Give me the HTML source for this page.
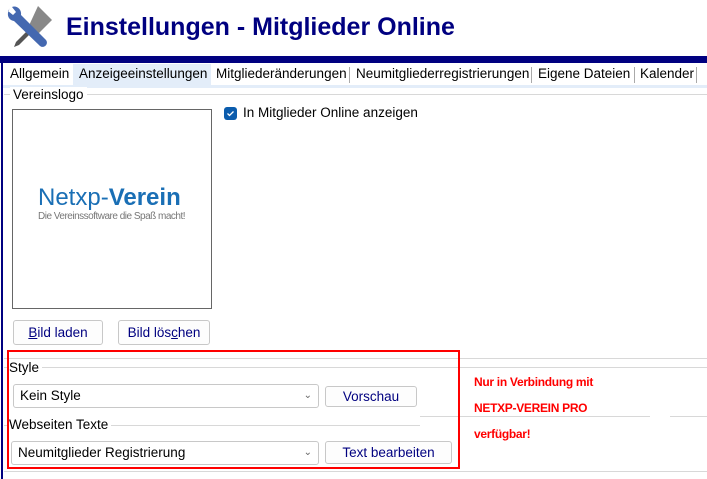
<!DOCTYPE html>
<html><head><meta charset="utf-8"><style>
*{margin:0;padding:0;box-sizing:border-box}
body{width:707px;height:479px;background:#fff;position:relative;overflow:hidden;font-family:"Segoe UI","Liberation Sans",sans-serif;font-size:13px;color:#000}
.a{position:absolute}
.t{position:absolute;top:66px;font-size:13.5px;white-space:nowrap}
.hl{position:absolute;height:1px;background:#d8d8d8}
.btn{position:absolute;border:1px solid #c8c8c8;border-radius:3px;background:#fdfdfd;color:#000080;text-align:center;font-size:13.5px}
.cb{position:absolute;border:1px solid #c8c8c8;border-radius:3px;background:#fff;font-size:13.5px;padding-left:6px}
.red{position:absolute;color:#f00;font-weight:bold;font-size:12px;font-family:"Liberation Sans Narrow","Liberation Sans",sans-serif;letter-spacing:-0.3px}
</style></head><body>
<svg class="a" style="left:4px;top:2px" width="52" height="48" viewBox="0 0 52 48">
<path d="M34 4 L48 18 L30 36 L22 30 Z" fill="#888"/>
<path d="M24 28 L12 40 L10 45 L15 43 L27 31 Z" fill="#555"/>
<path d="M6 6 C2 12 4 18 10 19 L36 44 C40 47 45 42 42 38 L17 13 C18 7 12 3 8 5 L12 10 L9 13 L4 9 Z" fill="#4468b0"/>
</svg>
<div class="a" style="left:66px;top:13px;font-size:25px;font-weight:bold;color:#000080;font-family:'Liberation Sans',sans-serif">Einstellungen - Mitglieder Online</div>
<div class="a" style="left:0;top:56px;width:707px;height:7px;background:#000080"></div>
<div class="a" style="left:1px;top:56px;width:2px;height:423px;background:#000080"></div>
<div class="a" style="left:3px;top:85px;width:704px;height:3px;background:#e3edf9"></div>
<div class="a" style="left:73px;top:64px;width:138px;height:22px;background:#e3edf9"></div>
<div class="t" style="left:10px">Allgemein</div>
<div class="t" style="left:79px">Anzeigeeinstellungen</div>
<div class="t" style="left:216px">Mitgliederänderungen</div>
<div class="a" style="left:349px;top:67px;width:1px;height:16px;background:#aaa"></div>
<div class="t" style="left:356px">Neumitgliederregistrierungen</div>
<div class="a" style="left:531px;top:67px;width:1px;height:16px;background:#aaa"></div>
<div class="t" style="left:538px">Eigene Dateien</div>
<div class="a" style="left:634px;top:67px;width:1px;height:16px;background:#aaa"></div>
<div class="t" style="left:640px">Kalender</div>
<div class="a" style="left:696px;top:67px;width:1px;height:16px;background:#aaa"></div>
<div class="hl" style="left:4px;top:94px;width:703px"></div>
<div class="a" style="left:10px;top:87px;background:#fff;padding:0 3px;font-size:13.5px">Vereinslogo</div>
<div class="a" style="left:12px;top:109px;width:200px;height:200px;border:1px solid #666;background:#fff"></div>
<div class="a" style="left:38px;top:184px;font-size:24px;color:#1a6fb5;font-family:'Liberation Sans',sans-serif">Netxp-<b>Verein</b></div>
<div class="a" style="left:38px;top:211px;font-size:10px;color:#777;letter-spacing:-0.5px;font-family:'Liberation Sans Narrow','Liberation Sans',sans-serif">Die Vereinssoftware die Spaß macht!</div>
<div class="a" style="left:224px;top:107px;width:13px;height:13px;border-radius:3px;background:#0b5cad"><svg width="13" height="13"><path d="M3.5 6.5 L5.5 8.5 L9.5 4.5" stroke="#fff" stroke-width="1.3" fill="none"/></svg></div>
<div class="a" style="left:243px;top:105px;font-size:13.5px">In Mitglieder Online anzeigen</div>
<div class="btn" style="left:13px;top:320px;width:90px;height:25px;line-height:23px"><u>B</u>ild laden</div>
<div class="btn" style="left:118px;top:320px;width:92px;height:25px;line-height:23px">Bild lös<u>c</u>hen</div>
<div class="hl" style="left:4px;top:358px;width:703px"></div>
<div class="hl" style="left:4px;top:367px;width:703px"></div>
<div class="hl" style="left:4px;top:471px;width:703px"></div>
<div class="hl" style="left:4px;top:425px;width:703px"></div>
<div class="a" style="left:420px;top:408px;width:287px;height:18px;background:#fff"></div>
<div class="hl" style="left:420px;top:416px;width:230px"></div>
<div class="hl" style="left:670px;top:416px;width:37px"></div>
<div class="a" style="left:9px;top:360px;background:#fff;padding-right:3px;font-size:13.5px">Style</div>
<div class="cb" style="left:13px;top:384px;width:306px;height:24px;line-height:22px">Kein Style<span style="position:absolute;right:6px;color:#666;font-size:10px">&#8964;</span></div>
<div class="btn" style="left:325px;top:386px;width:92px;height:21px;line-height:19px">Vorschau</div>
<div class="a" style="left:9px;top:417px;background:#fff;padding-right:3px;font-size:13.5px">Webseiten Texte</div>
<div class="cb" style="left:11px;top:441px;width:308px;height:24px;line-height:22px">Neumitglieder Registrierung<span style="position:absolute;right:6px;color:#666;font-size:10px">&#8964;</span></div>
<div class="btn" style="left:325px;top:441px;width:127px;height:23px;line-height:21px">Text bearbeiten</div>
<div class="a" style="left:7px;top:350px;width:453px;height:119px;border:2px solid #f00"></div>
<div class="red" style="left:474px;top:375px">Nur in Verbindung mit</div>
<div class="red" style="left:474px;top:401px">NETXP-VEREIN PRO</div>
<div class="red" style="left:474px;top:427px">verfügbar!</div>
</body></html>
